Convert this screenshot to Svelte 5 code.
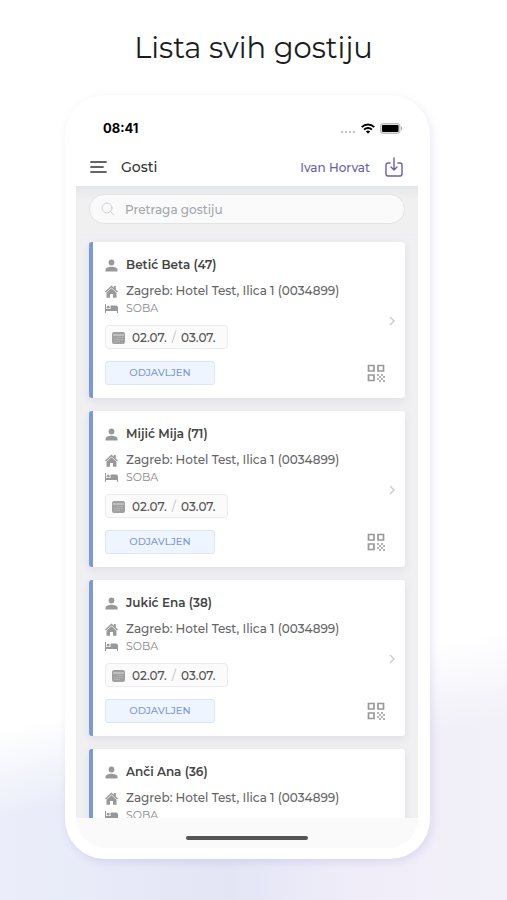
<script>
	let search = $state('');

	const guests = [
		{ name: 'Betić Beta', age: 47 },
		{ name: 'Mijić Mija', age: 71 },
		{ name: 'Jukić Ena', age: 38 },
		{ name: 'Anči Ana', age: 36 }
	];

	const filtered = $derived(
		guests.filter((g) => g.name.toLowerCase().includes(search.toLowerCase()))
	);
</script>

<div class="page">
	<h1>Lista svih gostiju</h1>

	<main class="phone">
		<div class="status">
			<span>08:41</span>
			<div class="signals">
				<svg width="16" height="4" viewBox="0 0 16 4" fill="#c4c4c4">
					<circle cx="2" cy="2" r="1.2" /><circle cx="6" cy="2" r="1.2" />
					<circle cx="10" cy="2" r="1.2" /><circle cx="14" cy="2" r="1.2" />
				</svg>
				<svg width="14" height="11" viewBox="0 0 14 11" fill="none" stroke="#000" stroke-width="2">
					<path d="M.8 4.1a8.8 8.8 0 0 1 12.4 0M3.1 6.6a5.6 5.6 0 0 1 7.8 0" />
					<path d="M7 10.8 4.9 8.6a3 3 0 0 1 4.2 0z" fill="#000" stroke="none" />
				</svg>
				<svg width="23" height="11" viewBox="0 0 23 11">
					<rect x=".5" y=".5" width="19.5" height="10" rx="2.5" fill="#ddd" stroke="#bbb" />
					<rect x="2" y="2" width="16.5" height="7" rx="1" />
					<path d="M21 3.5c1.6.6 1.6 3.4 0 4z" fill="#aaa" />
				</svg>
			</div>
		</div>

		<header>
			<button aria-label="Izbornik">
				<svg width="17" height="12" viewBox="0 0 17 12" stroke="#333" stroke-width="1.7" stroke-linecap="round">
					<path d="M1 1h15M1 6h12M1 11h15" />
				</svg>
			</button>
			<h2>Gosti</h2>
			<a href="#profil">Ivan Horvat</a>
			<button aria-label="Preuzmi">
				<svg width="18" height="20" viewBox="0 0 18 20" fill="none" stroke="#6a5eae" stroke-width="1.4" stroke-linecap="round" stroke-linejoin="round">
					<path d="M5 6H3a2 2 0 0 0-2 2v9a2 2 0 0 0 2 2h12a2 2 0 0 0 2-2V8a2 2 0 0 0-2-2h-2M9 1v12M6 10l3 3 3-3" />
				</svg>
			</button>
		</header>

		<div class="content">
			<div class="search">
				<label>
					<svg width="14" height="14" viewBox="0 0 14 14" fill="none" stroke="#ced0d4" stroke-linecap="round">
						<circle cx="6" cy="6" r="5" /><path d="m10 10 3 3" />
					</svg>
					<input type="text" placeholder="Pretraga gostiju" aria-label="Pretraga gostiju" bind:value={search} />
				</label>
			</div>

			<div class="list">
				{#each filtered as guest}
					<article>
						<div class="info">
							<h3>
								<svg width="13" height="13" viewBox="0 0 13 13" fill="#999">
									<circle cx="6.5" cy="3.5" r="2.9" />
									<path d="M.5 12.5v-1.8c0-2 3-3 6-3s6 1 6 3v1.8z" />
								</svg>
								{guest.name} ({guest.age})
							</h3>
							<p class="address">
								<svg width="13" height="13" viewBox="0 0 13 13" fill="#999">
									<path d="M0 6.4 6.5.5l2.4 2.200V1h1.900v3.400L13 6.400l-1 1.200-5.500-5L1 7.600z" />
									<path d="M1.500 7.700 6.500 3.200l5 4.500v5H8V9H5v3.700H1.500z" />
								</svg>
								Zagreb: Hotel Test, Ilica 1 (0034899)
							</p>
							<p class="room">
								<svg width="13" height="9" viewBox="0 0 13 9" fill="#999">
									<path d="M0 0h1v5h4.500V1.500H11a2 2 0 0 1 2 2V9h-1V7H1v2H0z" />
									<circle cx="3.200" cy="3.200" r="1.400" />
								</svg>
								SOBA
							</p>
							<div class="dates">
								<svg width="13" height="13" viewBox="0 0 13 13" fill="none">
									<rect y="1" width="13" height="12" rx="2" fill="#a0a0a0" />
									<path d="M1 4h11" stroke="#ddd" />
									<path d="M5 6.500h6M2 8.500h9M2 10.500h6" stroke="#b8b8b8" stroke-dasharray="1.500 .8" />
								</svg>
								<span>02.07.</span>
								<i>/</i>
								<span>03.07.</span>
							</div>
							<span class="badge">ODJAVLJEN</span>
						</div>
						<div class="actions">
							<button aria-label="Detalji">
								<svg width="6" height="10" viewBox="0 0 6 10" fill="none" stroke="#ccc" stroke-width="1.4">
									<path d="m1 1 4 4-4 4" />
								</svg>
							</button>
							<button class="qr" aria-label="QR kod">
								<svg width="18" height="18" viewBox="0 0 18 18" fill="none" stroke="#999" stroke-width="1.7">
									<path d="M1.500 1.500H7V7H1.500zM11 1.500h5.500V7H11zM1.500 11H7v5.500H1.500z" />
									<path d="M10 10h2v2h-2zM14 10h2v2h-2zM12 12h2v2h-2zM16 12h2v2h-2zM10 14h2v2h-2zM14 14h2v2h-2zM12 16h2v2h-2zM16 16h2v2h-2z" fill="#b4b4b4" stroke="none" />
								</svg>
							</button>
						</div>
					</article>
				{/each}
			</div>
		</div>

		<footer><div class="home"></div></footer>
	</main>
</div>

<style>
	:global(body) {
		margin: 0;
	}

	* {
		box-sizing: border-box;
	}

	h1, h2, h3, p {
		margin: 0;
		font-weight: 400;
	}

	svg {
		display: block;
		flex: none;
	}

	button {
		padding: 0;
		border: none;
		background: none;
		cursor: pointer;
	}

	.page {
		display: flex;
		flex-direction: column;
		height: 100vh;
		padding: 0 77px 41px 65px;
		font-family: Montserrat, Inter, sans-serif;
		background:
			linear-gradient(169deg, #fff 73%, transparent 82%),
			linear-gradient(to right, #ebeefa, #e3e5f5 45%, #f0edf9 70%, #f2f0f8);
	}

	h1 {
		padding: 28px 0 27px 12px;
		color: #1c1c1e;
		font-size: 29px;
		line-height: 40px;
		text-align: center;
		white-space: nowrap;
	}

	.phone {
		display: flex;
		flex: 1;
		flex-direction: column;
		min-height: 0;
		padding: 0 12px 11px 11px;
		border-radius: 40px;
		background: #fff;
		box-shadow: 2px 3px 8px rgba(90, 80, 180, 0.13);
	}

	.status {
		display: flex;
		align-items: center;
		justify-content: space-between;
		padding: 23px 15px 0 27px;
		font: 700 13px/20px Inter, sans-serif;
	}

	.signals {
		display: flex;
		align-items: center;
		gap: 5px;
	}

	.signals svg:first-child {
		margin-top: 7px;
	}

	header {
		display: flex;
		align-items: center;
		height: 48px;
		padding: 10px 15px 0 14px;
	}

	h2 {
		flex: 1;
		margin-left: 14px;
		color: #333;
		font-size: 14px;
		font-weight: 500;
	}

	header a {
		margin-right: 15px;
		color: #6a5eae;
		font-size: 12px;
		font-weight: 500;
		text-decoration: none;
	}

	.content {
		flex: 1;
		min-height: 0;
		overflow: hidden;
		background: #f0f0f3;
	}

	.search {
		padding: 8px 13px 10px;
		background: linear-gradient(#e5e6e8, #f0f0f1 14px);
		border-bottom: 1px solid #eeeef1;
	}

	.search label {
		display: flex;
		align-items: center;
		gap: 10px;
		height: 30px;
		padding: 0 11px;
		border: 1px solid #e2e3e5;
		border-radius: 15px;
		background: #fafafb;
	}

	input {
		flex: 1;
		min-width: 0;
		padding: 0;
		border: none;
		outline: none;
		background: none;
		color: #555;
		font: 500 12px Montserrat, Inter, sans-serif;
	}

	input::placeholder {
		color: #a3a6ab;
	}

	.list {
		display: flex;
		flex-direction: column;
		gap: 13px;
		padding: 7px 13px;
	}

	article {
		display: flex;
		justify-content: space-between;
		padding: 15px 10px 13px 12px;
		border-left: 4px solid #7c98d5;
		border-radius: 3px;
		background: #fff;
		box-shadow: 0 3px 10px rgba(60, 60, 90, 0.09);
	}

	.info {
		display: flex;
		flex-direction: column;
		align-items: flex-start;
	}

	h3, p {
		display: flex;
		align-items: center;
		gap: 8px;
		font-size: 12px;
		line-height: 16px;
		white-space: nowrap;
	}

	h3 {
		margin-bottom: 10px;
		color: #444;
		font-weight: 600;
	}

	.address {
		color: #666;
		font-weight: 500;
	}

	.room {
		margin: 2px 0 10px;
		color: #8a8a8a;
		font-size: 11px;
		line-height: 14px;
	}

	.dates {
		display: flex;
		align-items: center;
		height: 24px;
		margin-bottom: 12px;
		padding: 0 11px 0 6px;
		border: 1px solid #ebebeb;
		border-radius: 4px;
		background: #fbfbfb;
		color: #555;
		font-size: 12px;
		font-weight: 500;
	}

	.dates svg {
		margin-right: 7px;
	}

	.dates i {
		margin: 0 5px;
		color: #ccc;
		font-style: normal;
	}

	.badge {
		width: 110px;
		border: 1px solid #dde6f5;
		border-radius: 3px;
		background: #eff5fe;
		color: #7c98d5;
		font-size: 10px;
		line-height: 22px;
		font-weight: 500;
		text-align: center;
	}

	.actions {
		display: flex;
		flex-direction: column;
		align-items: flex-end;
		justify-content: space-between;
		padding-top: 59px;
	}

	.qr {
		margin: 0 10px 3px 0;
	}

	footer {
		height: 30px;
		padding-top: 18px;
		border-radius: 0 0 30px 30px;
		background: #fafafa;
	}

	.home {
		width: 122px;
		height: 4px;
		margin: 0 auto;
		border-radius: 2px;
		background: #555;
	}
</style>
